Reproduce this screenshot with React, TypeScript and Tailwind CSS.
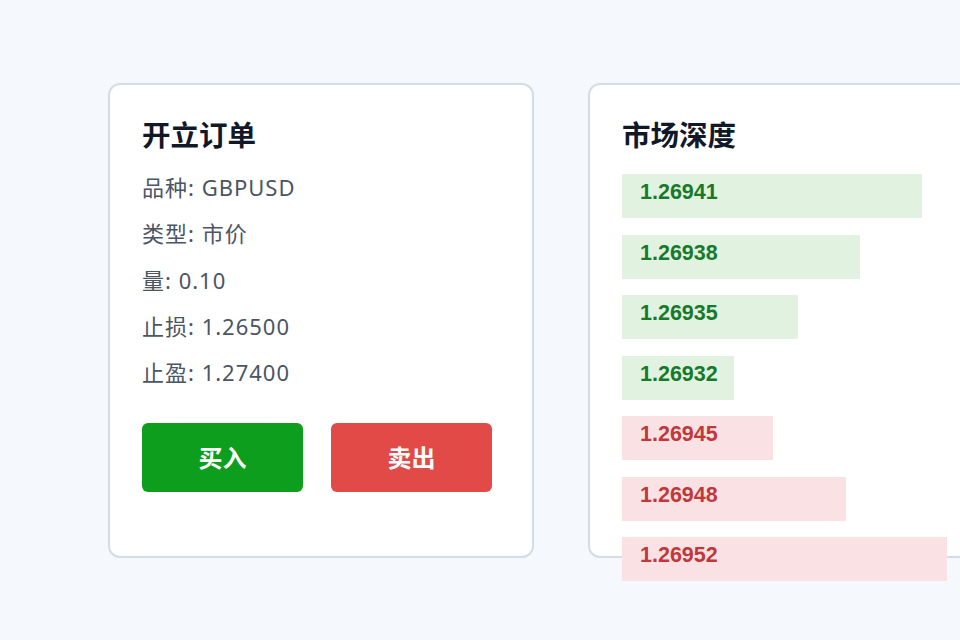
import React from 'react';

const FONT = { fontFamily: '"Noto Sans", "Noto Sans CJK SC", sans-serif' };
const NUM = { fontFamily: '"Liberation Sans", Arial, sans-serif' };

const details = [
  { label: '品种', value: 'GBPUSD' },
  { label: '类型', value: '市价' },
  { label: '量', value: '0.10' },
  { label: '止损', value: '1.26500' },
  { label: '止盈', value: '1.27400' },
];

const depth = [
  { price: '1.26941', side: 'bid', width: 300 },
  { price: '1.26938', side: 'bid', width: 238 },
  { price: '1.26935', side: 'bid', width: 176 },
  { price: '1.26932', side: 'bid', width: 112 },
  { price: '1.26945', side: 'ask', width: 151 },
  { price: '1.26948', side: 'ask', width: 224 },
  { price: '1.26952', side: 'ask', width: 325 },
];

const OrderCard: React.FC = () => (
  <div className="w-[426px] h-[475px] shrink-0 bg-white border-2 border-[#d3dde8] rounded-[12px] px-[32px] pt-[30px]">
    <h2 className="text-[28.5px] leading-[40px] font-bold text-[#111827]">开立订单</h2>
    <div className="mt-[9px] flex flex-col">
      {details.map(d => (
        <p key={d.label} className="text-[22px] leading-[46.3px] tracking-[1px] text-[#4b5563]">
          {d.label}: {d.value}
        </p>
      ))}
    </div>
    <div className="mt-[28px] flex gap-[28px]">
      <button className="w-[161px] h-[69px] rounded-[6px] bg-[#0c9e1c] text-white text-[24px] font-bold">买入</button>
      <button className="w-[161px] h-[69px] rounded-[6px] bg-[#e14a47] text-white text-[24px] font-bold">卖出</button>
    </div>
  </div>
);

const DepthCard: React.FC = () => (
  <div className="w-[426px] h-[475px] shrink-0 bg-white border-2 border-[#d3dde8] rounded-[12px] px-[32px] pt-[30px]">
    <h2 className="text-[28.5px] leading-[40px] font-bold text-[#111827]">市场深度</h2>
    <div className="mt-[19px] flex flex-col gap-[16.5px]">
      {depth.map(row => (
        <div
          key={row.price}
          style={{ width: row.width, ...NUM }}
          className={`h-[44px] pl-[18px] pt-[5px] text-[21.5px] leading-[26px] font-bold ${
            row.side === 'bid' ? 'bg-[#e1f2e1] text-[#187a29]' : 'bg-[#fae2e4] text-[#c2383a]'
          }`}
        >
          {row.price}
        </div>
      ))}
    </div>
  </div>
);

export default function App() {
  return (
    <div style={FONT} className="w-[960px] h-[640px] overflow-hidden bg-[#f5f9fd]">
      <div className="flex gap-[54px] pl-[108px] pt-[83px]">
        <OrderCard />
        <DepthCard />
      </div>
    </div>
  );
}
